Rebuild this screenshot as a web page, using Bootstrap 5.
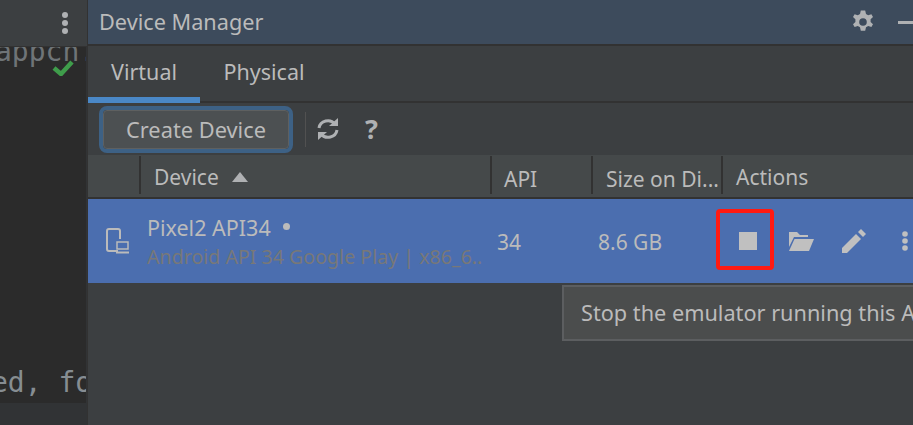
<!DOCTYPE html>
<html lang="en">
<head>
    <meta charset="UTF-8">
    <meta name="viewport" content="width=device-width, initial-scale=1.0">
    <title>Device Manager</title>
    <link href="https://cdn.jsdelivr.net/npm/bootstrap@5.3.0/dist/css/bootstrap.min.css" rel="stylesheet">
    <style>
        html, body {
            height: 425px;
            overflow: hidden;
        }
        body {
            background: #3c3f41;
            color: #bbbbbb;
            font-family: "Noto Sans", "Open Sans", sans-serif;
            font-size: 21px;
        }
        svg {
            display: block;
        }
        .ide-wrap {
            width: 913px;
            height: 425px;
            overflow: hidden;
        }
        .editor-side {
            width: 88px;
            flex: none;
            background: #313335;
            border-right: 1px solid #323232;
        }
        .editor-top {
            height: 47px;
            background: #3c3f41;
            border-bottom: 1px solid #323232;
            padding-right: 18px;
        }
        .editor-code {
            width: 86px;
            height: 356px;
            background: #2b2b2b;
            font-family: "DejaVu Sans Mono", monospace;
            font-size: 28px;
            overflow: hidden;
            white-space: nowrap;
        }
        .code-top {
            height: 32px;
            line-height: 32px;
            margin-top: -11px;
            margin-bottom: -8px;
            color: #6f7477;
            text-indent: -5px;
        }
        .code-check {
            padding-right: 12px;
        }
        .code-bottom {
            height: 32px;
            line-height: 32px;
            margin-top: 291px;
            color: #868d92;
            text-indent: -9px;
        }
        .dm-panel {
            flex: 1;
            min-width: 0;
        }
        .dm-title {
            height: 46px;
            background: #3d4b5c;
            border-bottom: 2px solid #323232;
            padding-left: 11px;
            font-size: 21.7px;
        }
        .dm-title-text {
            padding-top: 1px;
        }
        .dm-title-tools {
            gap: 24px;
        }
        .dm-dash {
            width: 15px;
            height: 3px;
            background: #afb1b3;
        }
        .dm-tabs {
            height: 57px;
            border-bottom: 2px solid #323232;
        }
        .dm-tab {
            width: 112px;
            text-align: center;
            line-height: 52px;
            height: 55px;
            font-size: 21.5px;
        }
        .dm-tab-on {
            border-bottom: 6px solid #4a88c7;
            height: 57px;
            margin-bottom: -2px;
        }
        .dm-tab-off {
            margin-left: 8px;
        }
        .dm-toolbar {
            height: 52px;
            padding-left: 15px;
        }
        .dm-create {
            width: 186px;
            height: 39px;
            line-height: 35px;
            padding: 0;
            background: #4c5052;
            border: 1px solid #5e6060;
            outline: 4px solid #3d6185;
            border-radius: 4px;
            color: #bbbbbb;
            font-size: 21.8px;
            text-align: center;
        }
        .dm-sep {
            width: 1px;
            height: 35px;
            background: #515151;
            margin: 0 10px 0 16px;
        }
        .dm-help {
            font-size: 27px;
            font-weight: 700;
            color: #afb1b3;
            line-height: 30px;
            margin-left: 25px;
        }
        .dm-head {
            height: 42px;
            background: #45494a;
            font-size: 21px;
            color: #bbbbbb;
        }
        .dm-head > div {
            padding-top: 2px;
            white-space: nowrap;
            overflow: hidden;
            line-height: 42px;
        }
        .hcol {
            border-right: 2px solid #323232;
            height: 38px;
            margin-top: 1px;
        }
        .hc-a { width: 53px; }
        .hc-b { width: 351px; padding-left: 13px; }
        .dm-head > .hc-b { padding-top: 4px; gap: 13px; }
        .hc-c { width: 101px; padding-left: 12px; }
        .hc-d { width: 130px; padding-left: 13px; }
        .dm-head > .hc-e { padding-left: 13px; line-height: 40px; }
        .dm-row {
            height: 86px;
            background: #4b6eaf;
            border-top: 2px solid #323232;
            position: relative;
        }
        .rc-icon { width: 59px; padding-left: 18px; }
        .rc-name { width: 350px; white-space: nowrap; overflow: hidden; padding-top: 2px; }
        .rc-api { width: 101px; font-size: 21px; padding-top: 3px; }
        .rc-size { width: 119px; font-size: 21px; white-space: nowrap; padding-top: 3px; }
        .dev-name {
            font-size: 21.5px;
            line-height: 30px;
        }
        .dev-dot {
            display: inline-block;
            width: 7px;
            height: 7px;
            border-radius: 50%;
            background: #bbbbbb;
            margin-left: 7px;
            vertical-align: 6px;
        }
        .dev-sub {
            font-size: 19.6px;
            line-height: 28px;
            color: #787878;
        }
        .rc-actions {
            gap: 28px;
            padding-left: 22px;
        }
        .act-folder { margin-left: 3px; }
        .act-dots { margin-left: 7px; }
        .red-box {
            position: absolute;
            left: 628px;
            top: 10px;
            width: 58px;
            height: 61px;
            border: 4px solid #ff1a12;
            border-radius: 4px;
        }
        .stop-tip {
            position: absolute;
            left: 474px;
            top: 86px;
            width: 360px;
            height: 56px;
            background: #4b4d4d;
            border: 2px solid #5c5e60;
            border-right: 0;
            padding-left: 17px;
            line-height: 52px;
            font-size: 21.7px;
            white-space: nowrap;
            overflow: hidden;
        }
    </style>
</head>
<body>
    <div class="ide-wrap d-flex">
        <div class="editor-side">
            <div class="editor-top d-flex justify-content-end align-items-center">
                <svg width="8" height="24" viewBox="0 0 8 24" fill="#afb1b3"><circle cx="4" cy="4" r="3"/><circle cx="4" cy="12" r="3"/><circle cx="4" cy="20" r="3"/></svg>
            </div>
            <div class="editor-code">
                <div class="code-top">appcn.</div>
                <div class="code-check d-flex justify-content-end">
                    <svg width="22" height="16" viewBox="0 0 22 16"><path d="M2 8l7 6L20 2" fill="none" stroke="#3f9d4b" stroke-width="4.5"/></svg>
                </div>
                <div class="code-bottom">ed, fo</div>
            </div>
        </div>
        <div class="dm-panel">
            <div class="dm-title d-flex justify-content-between align-items-center">
                <span class="dm-title-text">Device Manager</span>
                <div class="dm-title-tools d-flex align-items-center">
                    <svg width="22" height="24" viewBox="0 0 22 24"><path d="M11 .5l2.200 0 .8 3.500 2.200 1.200 3.200-1 1.600 2.800-2.400 2.300v2.600l2.400 2.300-1.600 2.800-3.200-1-2.200 1.200-.8 3.500H8.800l-.8-3.500-2.200-1.200-3.200 1-1.600-2.800 2.400-2.300V9.300L1 7l1.600-2.800 3.200 1L8 4l.8-3.500z" fill="#afb1b3"/><circle cx="11" cy="12" r="3.800" fill="#3d4b5c"/></svg>
                    <div class="dm-dash"></div>
                </div>
            </div>
            <div class="dm-tabs d-flex">
                <div class="dm-tab dm-tab-on">Virtual</div>
                <div class="dm-tab dm-tab-off">Physical</div>
            </div>
            <div class="dm-toolbar d-flex align-items-center">
                <button type="button" class="btn dm-create">Create Device</button>
                <div class="dm-sep"></div>
                <svg width="24" height="22" viewBox="0 0 24 22" fill="none" stroke="#afb1b3" stroke-width="3"><path d="M3 10a9 8.500 0 0 1 16-4"/><path d="M21 12a9 8.500 0 0 1-16 4"/><path d="M13 8h9V0z" fill="#afb1b3" stroke="none"/><path d="M11 14H2v8z" fill="#afb1b3" stroke="none"/></svg>
                <span class="dm-help">?</span>
            </div>
            <div class="dm-head d-flex">
                <div class="hcol hc-a"></div>
                <div class="hcol hc-b d-flex align-items-center">Device
                    <svg width="16" height="10" viewBox="0 0 16 10" fill="#afb1b3"><path d="M8 0l8 10H0z"/></svg>
                </div>
                <div class="hcol hc-c">API</div>
                <div class="hcol hc-d">Size on Di...</div>
                <div class="hc-e">Actions</div>
            </div>
            <div class="dm-row d-flex align-items-center">
                <div class="rc-icon">
                    <svg width="23" height="26" viewBox="0 0 23 26" fill="none" stroke="#bbbbbb" stroke-width="2"><path d="M12 23H3a2 2 0 0 1-2-2V3a2 2 0 0 1 2-2h9a2 2 0 0 1 2 2v8"/><path d="M11 14h11v7H11z" stroke-width="1.500"/><path d="M10 24.500h13" stroke-width="2"/></svg>
                </div>
                <div class="rc-name">
                    <div class="dev-name">Pixel2 API34 <span class="dev-dot"></span></div>
                    <div class="dev-sub">Android API 34 Google Play | x86_6..</div>
                </div>
                <div class="rc-api">34</div>
                <div class="rc-size">8.6 GB</div>
                <div class="rc-actions d-flex align-items-center">
                    <svg width="18" height="18" viewBox="0 0 18 18"><path d="M0 0h18v18H0z" fill="#c0c0c0"/></svg>
                    <svg class="act-folder" width="26" height="19" viewBox="0 0 26 19" fill="#c0c0c0"><path d="M1 0h8l3 3h8v2H6L1 15z"/><path d="M6.500 7H26l-5 12H1z"/></svg>
                    <svg width="24" height="24" viewBox="0 0 24 24" fill="#c0c0c0"><path d="M0 24v-5L14 5l5 5L5 24z"/><path d="M16 3l3-3 5 5-3 3z"/></svg>
                    <svg class="act-dots" width="8" height="20" viewBox="0 0 8 20" fill="#c0c0c0"><circle cx="4" cy="3" r="2.800"/><circle cx="4" cy="10" r="2.800"/><circle cx="4" cy="17" r="2.800"/></svg>
                </div>
                <div class="red-box"></div>
                <div class="stop-tip">Stop the emulator running this AVD</div>
            </div>
        </div>
    </div>
</body>
</html>
